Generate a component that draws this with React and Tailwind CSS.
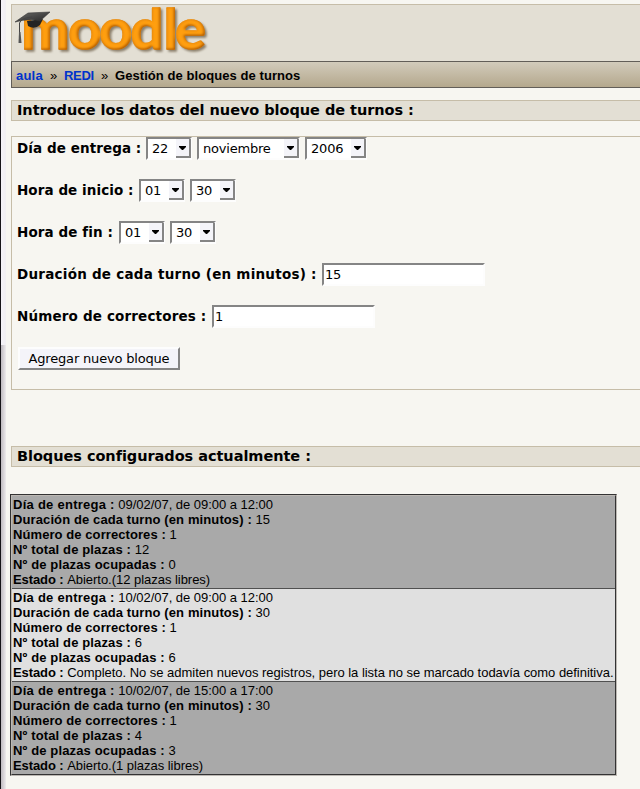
import React from 'react';

const blocks = [
  { date: '09/02/07, de 09:00 a 12:00', length: '15', graders: '1', total: '12', used: '0', state: 'Abierto.(12 plazas libres)' },
  { date: '10/02/07, de 09:00 a 12:00', length: '30', graders: '1', total: '6', used: '6', state: 'Completo. No se admiten nuevos registros, pero la lista no se marcado todavía como definitiva.' },
  { date: '10/02/07, de 15:00 a 17:00', length: '30', graders: '1', total: '4', used: '3', state: 'Abierto.(1 plazas libres)' },
];

function Logo() {
  return (
    <svg width="206" height="54" viewBox="11 5 206 54" className="block overflow-visible">
      <defs>
        <linearGradient id="cap" x1="0" y1="0" x2="1" y2="1">
          <stop offset="0" stopColor="#6d6d6a" />
          <stop offset="1" stopColor="#252525" />
        </linearGradient>
        <filter id="bevel" x="-5%" y="-20%" width="110%" height="140%" colorInterpolationFilters="sRGB">
          <feGaussianBlur in="SourceAlpha" stdDeviation="1.2" result="blur" />
          <feOffset in="blur" dx="1.500" dy="1.500" result="off" />
          <feFlood floodColor="#5b4a32" floodOpacity="0.65" />
          <feComposite in2="off" operator="in" result="shadow" />
          <feGaussianBlur in="SourceAlpha" stdDeviation="1.3" result="b2" />
          <feOffset in="b2" dx="-1.400" dy="-1.400" result="o2" />
          <feComposite in="SourceAlpha" in2="o2" operator="out" result="edge" />
          <feFlood floodColor="#a85400" floodOpacity="1" />
          <feComposite in2="edge" operator="in" result="dark" />
          <feOffset in="b2" dx="1.200" dy="1.200" result="o3" />
          <feComposite in="SourceAlpha" in2="o3" operator="out" result="edge2" />
          <feFlood floodColor="#e98a10" floodOpacity="0.7" />
          <feComposite in2="edge2" operator="in" result="light" />
          <feMerge>
            <feMergeNode in="shadow" />
            <feMergeNode in="SourceGraphic" />
            <feMergeNode in="dark" />
            <feMergeNode in="light" />
          </feMerge>
        </filter>
      </defs>
      <text transform="scale(1.05 1)" x="19.300 64 93.600 123.300 154.800 165.700" y="48.500" fontFamily="Lato, sans-serif" fontWeight="700" fontSize="55" fill="#ff9f10" stroke="#ff9f10" strokeWidth="1.400" strokeLinejoin="round" filter="url(#bevel)">moodle</text>
      <path d="M26 21 L27 26 Q33 30 39 25 L42 19 Z" fill="#242424" />
      <path d="M14 22 L27 13 L49 12 L39 21 Q29 18 14 22 Z" fill="url(#cap)" stroke="#383838" strokeWidth="0.6" />
      <path d="M31 17 Q20 18 18.500 23 L18.500 34" fill="none" stroke="#444" strokeWidth="1" />
      <path d="M18 32 L17.500 43 L20.500 43 L19.500 32 Z" fill="#555" />
    </svg>
  );
}

function Select({ value, width }) {
  return (
    <span className={'flex h-[23px] shrink-0 items-stretch border-2 border-t-[#858585] border-l-[#858585] border-r-[#fdfdfd] border-b-[#fdfdfd] bg-white ' + width}>
      <span className="flex-1 pl-[4px] text-[13px] leading-[20px] tracking-[-0.2px]">{value}</span>
      <span className="-mr-px flex w-[15px] items-start justify-center border-r-2 border-b-2 border-[#858585] bg-[#f4f4f9] pt-[7px]">
        <svg width="7" height="4" viewBox="0 0 7 4"><path d="M0 0H7V1L4 4H3L0 1Z" fill="#000" /></svg>
      </span>
    </span>
  );
}

function Field({ value }) {
  return (
    <span className="h-[23px] w-[163px] shrink-0 border-2 border-t-[#858585] border-l-[#858585] border-r-[#fdfdfd] border-b-[#fdfdfd] bg-white pl-px text-[13px] leading-[20px] tracking-[-0.3px]">{value}</span>
  );
}

function Row({ label, labelWidth, children }) {
  return (
    <div className="flex h-[42px] items-start gap-[5px]">
      <span className={'shrink-0 text-[13.5px] font-bold leading-[22px] ' + labelWidth}>{label}</span>
      {children}
    </div>
  );
}

function Heading({ children, className }) {
  return (
    <h2 className={'ml-px h-[21px] shrink-0 border-y border-l border-[#c6bda8] bg-[#e3dfd4] pl-[5px] text-[14.5px] font-bold leading-[19px] tracking-[-0.040px] ' + className}>{children}</h2>
  );
}

function Line({ label, value, spacing = 'tracking-[0.140px]' }) {
  return (
    <div className="h-[15px]">
      <b className={spacing}>{label} :</b> <span className="tracking-[-0.030px]">{value}</span>
    </div>
  );
}

export default function App() {
  return (
    <div className="flex h-[789px] w-[640px] overflow-hidden bg-[#f7f6f1] font-['DejaVu_Sans',sans-serif] whitespace-nowrap text-black">
      <div className="flex w-[10px] shrink-0">
        <div className="w-px bg-[#161418]" />
        <div className="flex w-[5px] flex-col">
          <div className="h-[345px] bg-linear-to-r from-[#f5f3f8] to-[#f1eff2]" />
          <div className="flex-1 bg-linear-to-r from-[#bfbbc0] to-[#eeebed]" />
        </div>
      </div>
      <div className="flex min-w-0 flex-1 flex-col">
        <header className="mt-[4px] ml-px h-[57px] shrink-0 border-t border-l border-[#c6bda8] bg-[#e3dfd4]">
          <Logo />
        </header>
        <nav className="ml-px flex h-[27px] shrink-0 items-center border-y border-l border-[#625e58] bg-linear-to-b from-[#d2cbbb] to-[#b4a88d] pt-[2px] pl-[4px] font-['Liberation_Sans',sans-serif] text-[13px] leading-[18px] font-bold">
          <span className="w-[34px] tracking-[0.2px] text-[#0033cc]">aula</span>
          <span className="w-[14px] font-normal">»</span>
          <span className="w-[37px] tracking-[-0.3px] text-[#0033cc]">REDI</span>
          <span className="w-[14px] font-normal">»</span>
          <span className="tracking-[0.070px]">Gestión de bloques de turnos</span>
        </nav>
        <Heading className="mt-[12px]">Introduce los datos del nuevo bloque de turnos :</Heading>
        <form className="mt-[15px] ml-px h-[254px] shrink-0 border-y border-l border-[#c6bda8] pl-[5px]">
          <Row label="Día de entrega :" labelWidth="w-[124px] tracking-[0.080px]">
            <Select value="22" width="w-[46px]" />
            <Select value="noviembre" width="w-[103px]" />
            <Select value="2006" width="w-[62px]" />
          </Row>
          <Row label="Hora de inicio :" labelWidth="w-[117px] tracking-[0.070px]">
            <Select value="01" width="w-[46px]" />
            <Select value="30" width="w-[46px]" />
          </Row>
          <Row label="Hora de fin :" labelWidth="w-[97px] tracking-[0.100px]">
            <Select value="01" width="w-[46px]" />
            <Select value="30" width="w-[46px]" />
          </Row>
          <Row label="Duración de cada turno (en minutos) :" labelWidth="w-[300px] tracking-[0.240px]">
            <Field value="15" />
          </Row>
          <Row label="Número de correctores :" labelWidth="w-[190px] tracking-[0.160px]">
            <Field value="1" />
          </Row>
          <button type="button" className="ml-px block h-[23px] w-[162px] border-2 border-t-[#fdfdfd] border-r-[#858585] border-b-[#858585] border-l-[#fdfdfd] bg-[#f4f4f9] text-[13px] leading-[19px] tracking-[-0.180px]">Agregar nuevo bloque</button>
        </form>
        <Heading className="mt-[56px]">Bloques configurados actualmente :</Heading>
        <div className="mt-[27px] w-[607px] shrink-0 border border-t-[#333] border-r-[#bcb8b3] border-b-[#bcb8b3] border-l-[#333]">
          <div className="border border-t-[#bcb8b3] border-r-[#333] border-b-[#333] border-l-[#bcb8b3] font-['Liberation_Sans',sans-serif] text-[13px] leading-[15px]">
            {blocks.map((b, i) => (
              <div key={i} className={'overflow-hidden pt-px pb-px pl-px ' + (i === 1 ? 'h-[94px] border-y border-[#505050] bg-[#e0e0e0]' : 'h-[92px] bg-[#a9a9a9]')}>
                <Line label="Día de entrega" value={b.date} spacing="tracking-[0.260px]" />
                <Line label="Duración de cada turno (en minutos)" value={b.length} spacing="tracking-[0.110px]" />
                <Line label="Número de correctores" value={b.graders} spacing="tracking-[0.080px]" />
                <Line label="Nº total de plazas" value={b.total} spacing="tracking-[0.140px]" />
                <Line label="Nº de plazas ocupadas" value={b.used} />
                <Line label="Estado" value={b.state} spacing="tracking-[-0.1px]" />
              </div>
            ))}
          </div>
        </div>
      </div>
    </div>
  );
}
